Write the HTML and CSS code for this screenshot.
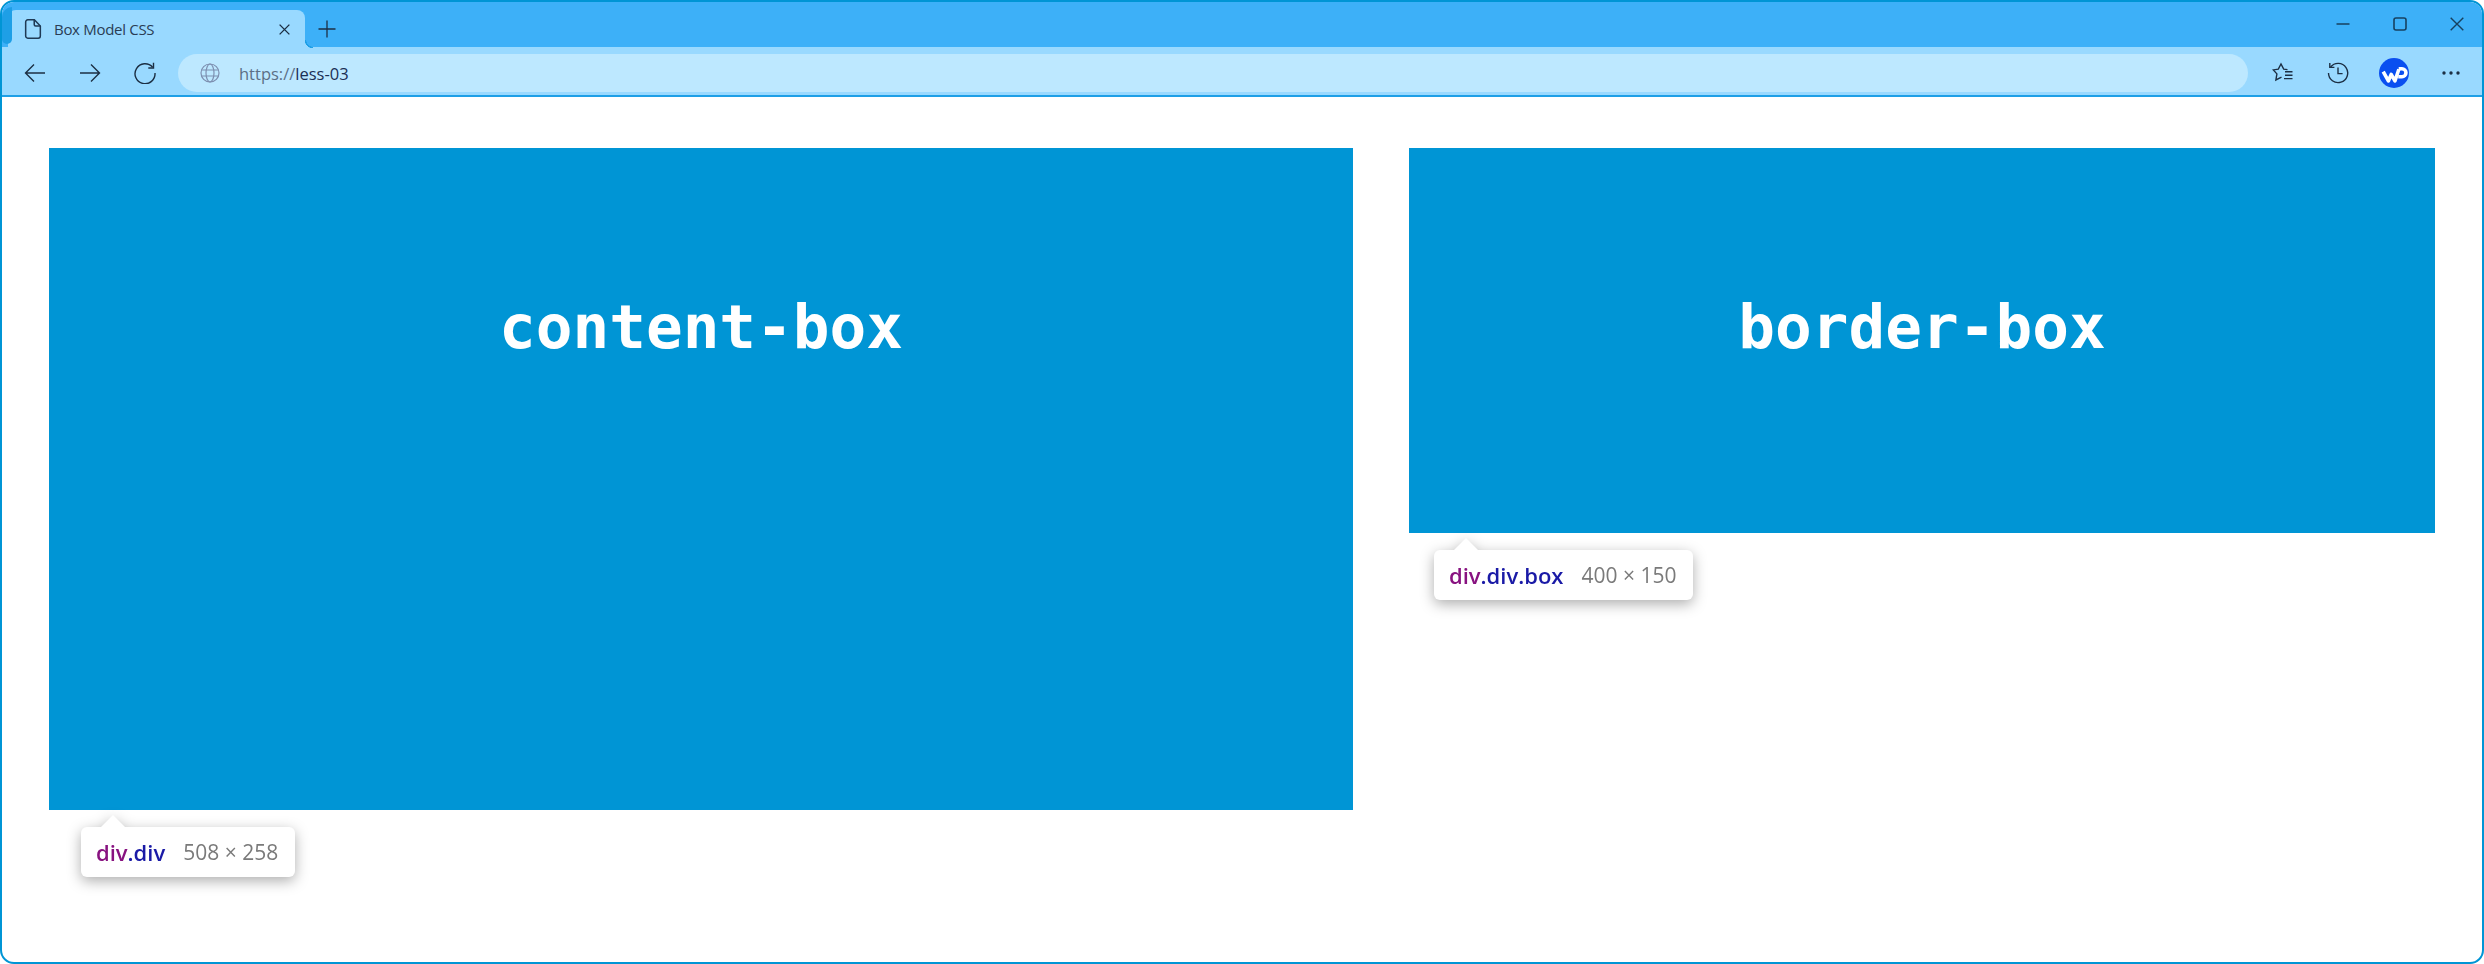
FILE: index.html
```html
<!DOCTYPE html>
<html lang="en">
<head>
<meta charset="utf-8">
<title>Box Model CSS</title>
<link rel="stylesheet" href="styles.css">
</head>
<body>
<div class="window">
  <header class="titlebar">
    <div class="tab">
      <svg class="ico-page" viewBox="0 0 18 18" width="22" height="22" fill="none" stroke="#1f3a55" stroke-width="1.25"><path d="M3 3.2a1.7 1.7 0 0 1 1.7-1.7h5.4l4.9 5v8.3a1.7 1.7 0 0 1-1.7 1.7H4.7A1.7 1.7 0 0 1 3 14.8z"/><path d="M10 1.5v3.8a1.2 1.2 0 0 0 1.2 1.2H15"/></svg>
      <span class="tab-title">Box Model CSS</span>
      <svg class="ico-close" viewBox="0 0 12 12" width="13" height="13" fill="none" stroke="#1c2f44" stroke-width="1.3"><path d="M1.5 1.5l9 9M10.5 1.5l-9 9"/></svg>
    </div>
    <svg class="ico-new" viewBox="0 0 18 18" width="18" height="18" fill="none" stroke="#1c2f44" stroke-width="1.3"><path d="M9 .5v17M.5 9h17"/></svg>
    <div class="winctl">
      <svg viewBox="0 0 14 14" width="14" height="14" fill="none" stroke="#17405f" stroke-width="1.4"><path d="M.5 7h13"/></svg>
      <svg viewBox="0 0 14 14" width="14" height="14" fill="none" stroke="#17405f" stroke-width="1.6"><rect x="1" y="1" width="12" height="12" rx="2"/></svg>
      <svg viewBox="0 0 14 14" width="14" height="14" fill="none" stroke="#17405f" stroke-width="1.4"><path d="M.7.7l12.6 12.6M13.3.7L.7 13.3"/></svg>
    </div>
  </header>
  <nav class="toolbar">
    <svg class="tool" viewBox="0 0 22 22" width="22" height="22" fill="none" stroke="#1c2f44" stroke-width="1.4"><path d="M21 11H1.5M10 2.5L1.5 11l8.5 8.5"/></svg>
    <svg class="tool" viewBox="0 0 22 22" width="22" height="22" fill="none" stroke="#1c2f44" stroke-width="1.4"><path d="M1 11h19.5M12 2.5l8.5 8.5-8.5 8.5"/></svg>
    <svg class="tool" viewBox="0 0 22 22" width="22" height="22" fill="none" stroke="#1c2f44" stroke-width="1.4"><path d="M18.6 5.2A10 10 0 1 0 21 11"/><path d="M19.5 .8v5.2h-5.2"/></svg>
    <div class="address">
      <svg viewBox="0 0 20 20" width="20" height="20" fill="none" stroke="#7d8fb0" stroke-width="1.2"><circle cx="10" cy="10" r="9"/><ellipse cx="10" cy="10" rx="4" ry="9"/><path d="M1.5 7h17M1.5 13h17"/></svg>
      <span class="url"><span class="scheme">https://</span>less-03</span>
    </div>
    <svg class="tool star" viewBox="0 0 22 22" width="22" height="22" fill="none" stroke="#1c2f44" stroke-width="1.4"><path d="M15.5 7.6l-3.8-.5L9 2 6.3 7.1l-5 .8 3.6 4-1 6.1 5.6-2.8"/><path d="M13 9.8h7.5M13 13.2h7.5M12 16.6h8.5"/></svg>
    <svg class="tool" viewBox="0 0 22 22" width="22" height="22" fill="none" stroke="#1c2f44" stroke-width="1.4"><path d="M3.6 5A9.6 9.6 0 1 1 1.5 11"/><path d="M2.8 1v4.4h4.6M11 5.5V11.6h4.6"/></svg>
    <svg class="avatar" viewBox="0 0 32 32" width="30" height="30"><circle cx="16" cy="16" r="16" fill="#0a4ff0"/><path d="M4.5 14.5l5.5 10 3-7 4 7 4.2-12.5" fill="none" stroke="#fff" stroke-width="3.8" stroke-linejoin="round"/><path d="M21 11.5h3.5a4 4 0 0 1 0 8.5h-4" fill="none" stroke="#fff" stroke-width="3.8"/></svg>
    <svg class="more" viewBox="0 0 18 4" width="18" height="4" fill="#1c2f44"><circle cx="2" cy="2" r="1.7"/><circle cx="9" cy="2" r="1.7"/><circle cx="16" cy="2" r="1.7"/></svg>
  </nav>
  <main class="page">
    <section class="box box-content">
      content-box
      <div class="tip"><span class="tag">div</span><span class="cls">.div</span><span class="dim">508 × 258</span></div>
    </section>
    <section class="box box-border">
      border-box
      <div class="tip"><span class="tag">div</span><span class="cls">.div.box</span><span class="dim">400 × 150</span></div>
    </section>
  </main>
</div>
</body>
</html>
```
FILE: styles.css
```css
* { box-sizing: border-box; }
html, body { margin: 0; height: 100%; background: #fff; }
.window {
  height: 964px;
  border: 2px solid #0095d5;
  border-radius: 14px;
  overflow: hidden;
  display: flex;
  flex-direction: column;
  background: #fff;
  font-family: "Open Sans", "Noto Sans", sans-serif;
}
.titlebar {
  height: 46px;
  background: #3db0f8;
  border-bottom: 1px solid #1e9fe6;
  display: flex;
  align-items: flex-end;
  padding-left: 6px;
  flex: none;
  margin-bottom: -1px;
}
.tab {
  width: 297px;
  height: 38px;
  margin-bottom: -1px;
  background: #99d9ff;
  border-radius: 8px 8px 0 0;
  display: flex;
  align-items: center;
  padding: 0 14px 0 14px;
  position: relative;
  z-index: 1;
}
.tab::before {
  content: "";
  position: absolute;
  left: -6px;
  top: -3px;
  bottom: 4px;
  width: 10px;
  background: #1e9fe6;
  border-radius: 10px 0 5px 5px;
  z-index: -1;
}
.tab::after {
  content: "";
  position: absolute;
  right: -8px;
  bottom: 0;
  width: 8px;
  height: 8px;
  background: radial-gradient(circle at 100% 0, transparent 6.5px, #1e9fe6 7px, #1e9fe6 8px, #99d9ff 8.5px);
}
.ico-page { flex: none; }
.tab-title {
  flex: 1;
  margin-left: 10px;
  font-size: 15px;
  color: #2a3d55;
  letter-spacing: -0.3px;
}
.ico-new { margin: 0 0 9px 13px; }
.winctl {
  margin-left: auto;
  align-self: center;
  display: flex;
  gap: 43px;
  padding-right: 18px;
  margin-top: -1px;
}
.toolbar {
  height: 50px;
  background: #99d9ff;
  border-bottom: 2px solid #1e9fe6;
  display: flex;
  align-items: center;
  padding: 4px 0 0 22px;
  flex: none;
}
.tool { flex: none; margin-right: 33px; }
.address {
  width: 2070px;
  height: 38px;
  margin-left: -11px;
  background: #bde8ff;
  border-radius: 19px;
  display: flex;
  align-items: center;
  gap: 19px;
  padding-left: 22px;
  flex: none;
}
.url { font-size: 16.5px; color: #1a2f55; }
.scheme { color: #5c6f86; }
.star { margin-left: 24px; }
.avatar { flex: none; margin-left: -3px; margin-right: 33px; }
.more { flex: none; }
.page {
  flex: 1;
  display: flex;
  align-items: flex-start;
  gap: 56px;
  padding: 51px 0 0 47px;
}
.box {
  position: relative;
  background: #0095d5;
  color: #fff;
  font-family: "DejaVu Sans Mono", "Liberation Mono", monospace;
  font-weight: 700;
  font-size: 61px;
  line-height: 1;
  text-align: center;
  padding-top: 148px;
  flex: none;
}
.box-content { width: 1304px; height: 662px; }
.box-border { width: 1026px; height: 385px; }
.tip {
  position: absolute;
  top: calc(100% + 17px);
  height: 50px;
  background: #fff;
  border-radius: 6px;
  filter: drop-shadow(0 4px 7px rgba(0, 0, 0, .32));
  display: flex;
  align-items: center;
  padding: 0 17px 0 15px;
  font-family: "Open Sans", "Noto Sans", sans-serif;
  font-size: 22px;
  font-weight: 400;
  white-space: nowrap;
}
.box-content .tip { left: 32px; }
.box-border .tip { left: 25px; }
.tip::before {
  content: "";
  position: absolute;
  left: 20px;
  top: -12px;
  width: 0;
  height: 0;
  border: 12px solid transparent;
  border-top: 0;
  border-bottom-color: #fff;
}
.tag { color: #881280; font-weight: 600; }
.cls { color: #1a1aa6; font-weight: 600; }
.dim { color: #7a7a7a; margin-left: 18px; font-size: 21px; }
```
